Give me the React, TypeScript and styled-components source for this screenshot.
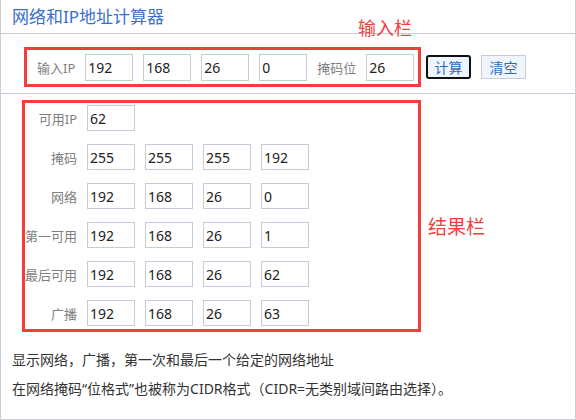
import { Fragment } from 'react'
import { createGlobalStyle, styled } from 'styled-components'

const GlobalStyle = createGlobalStyle`
    html, body {
        margin: 0;
        padding: 0;
        background: #ffffff;
    }
    body {
        font-family: "Noto Sans", "Noto Sans CJK SC", sans-serif;
    }
`;

const Panel = styled.div`
    position: relative;
    width: 576px;
    height: 420px;
    box-sizing: border-box;
    border: 1px solid #c9cdd9;
    border-top: none;
    background: #fff;
    overflow: hidden;
`;

const Header = styled.div`
    height: 33px;
    display: flex;
    align-items: center;
    padding-left: 11px;
    border-bottom: 1px solid #c9cdd9;
`;

const Title = styled.h1`
    margin: 0;
    font-size: 17px;
    font-weight: 400;
    color: #3a6fcb;
    line-height: 1;
`;

const InputSection = styled.div`
    display: flex;
    align-items: center;
    box-sizing: border-box;
    height: 60px;
    padding: 13px 0 6px 23px;
    border-bottom: 1px solid #c9cdd9;
`;

const Outline = styled.div`
    border: 3px solid #f53b3b;
    box-sizing: border-box;
`;

const InputBox = styled(Outline)`
    display: flex;
    align-items: center;
    gap: 10px;
    width: 397px;
    height: 40px;
    padding-left: 10px;
`;

const Label = styled.span`
    font-size: 13px;
    color: #808080;
    white-space: nowrap;
`;

const Field = styled.input<{ $h?: number }>`
    width: 48px;
    height: ${p => p.$h ?? 26}px;
    box-sizing: border-box;
    border: 1px solid #c5cbd8;
    padding: 0 2px;
    margin: 0;
    font-family: "Noto Sans", "Noto Sans CJK SC", sans-serif;
    font-size: 14px;
    color: #222;
    background: #fff;
    outline: none;
`;

const Button = styled.button<{ $focused?: boolean }>`
    width: 45px;
    height: 24px;
    box-sizing: border-box;
    margin-left: ${p => (p.$focused ? 5 : 10)}px;
    padding: 0;
    background: #eef5fc;
    border: ${p => (p.$focused ? '2px solid #111' : '1px solid #c6cdd9')};
    border-radius: ${p => (p.$focused ? 3 : 0)}px;
    font-family: "Noto Sans", "Noto Sans CJK SC", sans-serif;
    font-size: 14px;
    color: #2a6cc5;
    cursor: pointer;
`;

const ResultBox = styled(Outline)`
    display: grid;
    grid-template-columns: 52px repeat(4, 48px);
    grid-auto-rows: 26px;
    column-gap: 10px;
    row-gap: 13px;
    align-items: center;
    width: 399px;
    height: 232px;
    margin: 6px 0 0 21px;
    padding-top: 2px;
`;

const RowLabel = styled(Label)`
    grid-column: 1;
    text-align: right;
`;

const Filler = styled.span<{ $span: number }>`
    grid-column: span ${p => p.$span};
`;

const Notes = styled.div`
    display: flex;
    flex-direction: column;
    gap: 9px;
    padding: 18px 0 0 11px;
`;

const Note = styled.p`
    margin: 0;
    font-size: 14px;
    line-height: 20px;
    color: #333;
    white-space: nowrap;
`;

const Annotation = styled.span<{ $top: number; $left: number; $size: number }>`
    position: absolute;
    top: ${p => p.$top}px;
    left: ${p => p.$left}px;
    font-size: ${p => p.$size}px;
    line-height: 1;
    color: #f24040;
    white-space: nowrap;
`;

const rows: { label: string; values: string[] }[] = [
    { label: '可用IP', values: ['62'] },
    { label: '掩码', values: ['255', '255', '255', '192'] },
    { label: '网络', values: ['192', '168', '26', '0'] },
    { label: '第一可用', values: ['192', '168', '26', '1'] },
    { label: '最后可用', values: ['192', '168', '26', '62'] },
    { label: '广播', values: ['192', '168', '26', '63'] },
];

export default function App() {
    return (
        <>
            <GlobalStyle />
            <Panel>
                <Header>
                    <Title>网络和IP地址计算器</Title>
                </Header>

                <InputSection>
                    <InputBox>
                        <Label>输入IP</Label>
                        {['192', '168', '26', '0'].map((v, i) => (
                            <Field key={i} $h={27} defaultValue={v} />
                        ))}
                        <Label>掩码位</Label>
                        <Field $h={27} defaultValue="26" />
                    </InputBox>
                    <Button $focused>计算</Button>
                    <Button>清空</Button>
                </InputSection>

                <ResultBox>
                    {rows.map(row => (
                        <Fragment key={row.label}>
                            <RowLabel>{row.label}</RowLabel>
                            {row.values.map((v, i) => (
                                <Field key={i} defaultValue={v} readOnly />
                            ))}
                            {row.values.length < 4 && <Filler $span={4 - row.values.length} />}
                        </Fragment>
                    ))}
                </ResultBox>

                <Notes>
                    <Note>显示网络，广播，第一次和最后一个给定的网络地址</Note>
                    <Note>在网络掩码“位格式”也被称为CIDR格式（CIDR=无类别域间路由选择）。</Note>
                </Notes>

                <Annotation $top={19} $left={357} $size={18}>输入栏</Annotation>
                <Annotation $top={218} $left={427} $size={19}>结果栏</Annotation>
            </Panel>
        </>
    )
}
